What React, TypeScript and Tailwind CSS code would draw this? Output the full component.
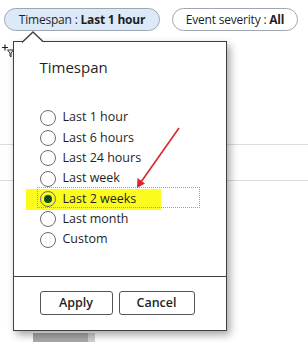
import React from "react";

const options = [
  "Last 1 hour",
  "Last 6 hours",
  "Last 24 hours",
  "Last week",
  "Last 2 weeks",
  "Last month",
  "Custom",
];

function Radio({ checked }: { checked?: boolean }) {
  return (
    <span className="flex h-[16px] w-[16px] shrink-0 items-center justify-center rounded-full border border-[#6b6b6b]">
      {checked && <span className="h-[8px] w-[8px] rounded-full bg-[#0f4d1c]" />}
    </span>
  );
}

export default function App() {
  const selected = "Last 2 weeks";

  return (
    <div className="relative h-[342px] w-[308px] overflow-hidden bg-white font-['Segoe_UI','Open_Sans',sans-serif] text-[#1f1f1f]">
      {/* filter pills */}
      <div className="flex gap-3 pl-1 pt-2">
        <div className="flex h-[23px] w-[156px] items-center justify-center rounded-full border border-[#9ea7b0] bg-[#dbe9f8] text-[12px] tracking-[-0.2px]">
          <span>Timespan :&nbsp;</span>
          <span className="font-bold">Last 1 hour</span>
        </div>
        <div className="flex h-[23px] w-[126px] items-center justify-center rounded-full border border-[#9ea7b0] bg-white text-[12px] tracking-[-0.2px]">
          <span>Event severity :&nbsp;</span>
          <span className="font-bold">All</span>
        </div>
      </div>

      {/* page behind the popup */}
      <svg className="ml-[1px] mt-[12px]" width="13" height="15" viewBox="0 0 13 15">
        <path d="M1 4.5h6M4 1.5v6" stroke="#222" strokeWidth="1.2" fill="none" />
        <path d="M6.5 7h6l-2.5 3v4l-1-1v-3z" stroke="#333" strokeWidth="1" fill="none" />
      </svg>
      <div className="mt-[86px] h-[37px] border-y border-[#dddddd]" />
      <div className="ml-[33px] mt-[152px] flex h-[9px]">
        <div className="w-[55px] bg-[#a9a9a9]" />
        <div className="w-[7px] bg-[#cfcfcf]" />
      </div>

      {/* popup */}
      <div className="absolute left-[13px] top-[41px] flex h-[290px] w-[214px] flex-col border-[1.5px] border-[#3f3f3f] bg-white shadow-[3px_4px_8px_rgba(0,0,0,0.35)]">
        <div className="pl-[25.5px] pt-[14.5px] text-[15px] leading-[20px]">Timespan</div>

        <div className="mt-[31px] flex flex-col">
          {options.map((o) => {
            const on = o === selected;
            return (
              <div key={o} className="relative flex h-[20.33px] items-center gap-[7px] pl-[25.5px] text-[12.5px]">
                {on && (
                  <>
                    <div className="absolute left-[12px] top-0 h-[21px] w-[135px] bg-[#fbfb1e]" />
                    <div className="absolute left-[23px] top-[-2px] h-[21px] w-[163px] border border-dotted border-[#66b3cf]" />
                  </>
                )}
                <span className="relative">
                  <Radio checked={on} />
                </span>
                <span className="relative">{o}</span>
              </div>
            );
          })}
        </div>

        <div className="mt-auto h-[54px] border-t-[1.5px] border-[#3f3f3f] pl-[25.5px] pt-[14px]">
          <div className="flex gap-[6px]">
            <button className="h-[24px] w-[73px] rounded-[3px] border border-[#555] bg-white text-[12.5px] font-semibold">
              Apply
            </button>
            <button className="h-[24px] w-[76px] rounded-[3px] border border-[#555] bg-white text-[12.5px] font-semibold">
              Cancel
            </button>
          </div>
        </div>
      </div>

      {/* pointer */}
      <svg className="absolute left-[22px] top-[31px]" width="23" height="12" viewBox="0 0 23 12">
        <path d="M0 11.5 L11 1 L22 11.5" fill="white" stroke="#3f3f3f" strokeWidth="1.4" />
        <rect x="1" y="11" width="21" height="1" fill="white" />
      </svg>

      {/* red annotation arrow */}
      <svg className="pointer-events-none absolute left-0 top-0" width="308" height="342">
        <line x1="179" y1="128" x2="141" y2="182" stroke="#d8262c" strokeWidth="1.6" />
        <polygon points="137,188 137.5,178 145,183.5" fill="#d8262c" />
      </svg>
    </div>
  );
}
